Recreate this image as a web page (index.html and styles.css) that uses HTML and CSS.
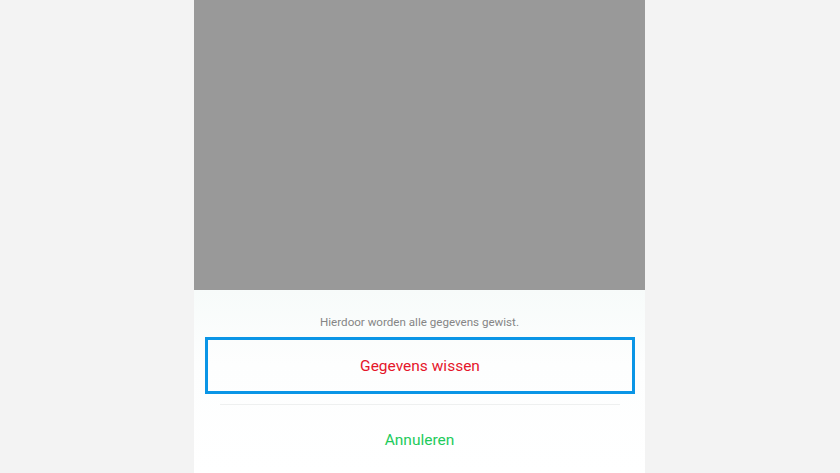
FILE: index.html
```html
<!DOCTYPE html>
<html lang="nl">
<head>
<meta charset="utf-8">
<title>Gegevens wissen</title>
<link rel="stylesheet" href="styles.css">
</head>
<body>
<div class="phone">
  <div class="backdrop"></div>
  <div class="sheet">
    <p class="message">Hierdoor worden alle gegevens gewist.</p>
    <div class="action action-danger">Gegevens wissen</div>
    <div class="divider"></div>
    <div class="action action-cancel">Annuleren</div>
  </div>
</div>
</body>
</html>
```

FILE: styles.css
```css
html, body {
  margin: 0;
  padding: 0;
  height: 100%;
}
body {
  background: #f3f3f3;
  font-family: Roboto, "Noto Sans", sans-serif;
  overflow: hidden;
}
.phone {
  margin-left: 194px;
  width: 451px;
  height: 473px;
  display: flex;
  flex-direction: column;
  background: #fff;
}
.backdrop {
  height: 290px;
  background: #999999;
  flex: none;
}
.sheet {
  flex: 1;
  display: flex;
  flex-direction: column;
  align-items: center;
  background: linear-gradient(#f7fbfa, #fdfefe 40%, #ffffff);
}
.message {
  margin: 24px 0 0;
  height: 16px;
  line-height: 16px;
  font-size: 11.6px;
  color: #858585;
}
.action {
  box-sizing: border-box;
  display: flex;
  align-items: center;
  justify-content: center;
  font-size: 15.5px;
}
.action-danger {
  margin-top: 7px;
  width: 430px;
  height: 57px;
  margin-left: 1px;
  border: 3px solid #0a95e6;
  color: #e5162a;
}
.divider {
  margin-top: 10px;
  width: 400px;
  height: 1px;
  background: #eef0f0;
}
.action-cancel {
  margin-top: 0;
  height: 70px;
  width: 100%;
  color: #1ecb5c;
}
```
